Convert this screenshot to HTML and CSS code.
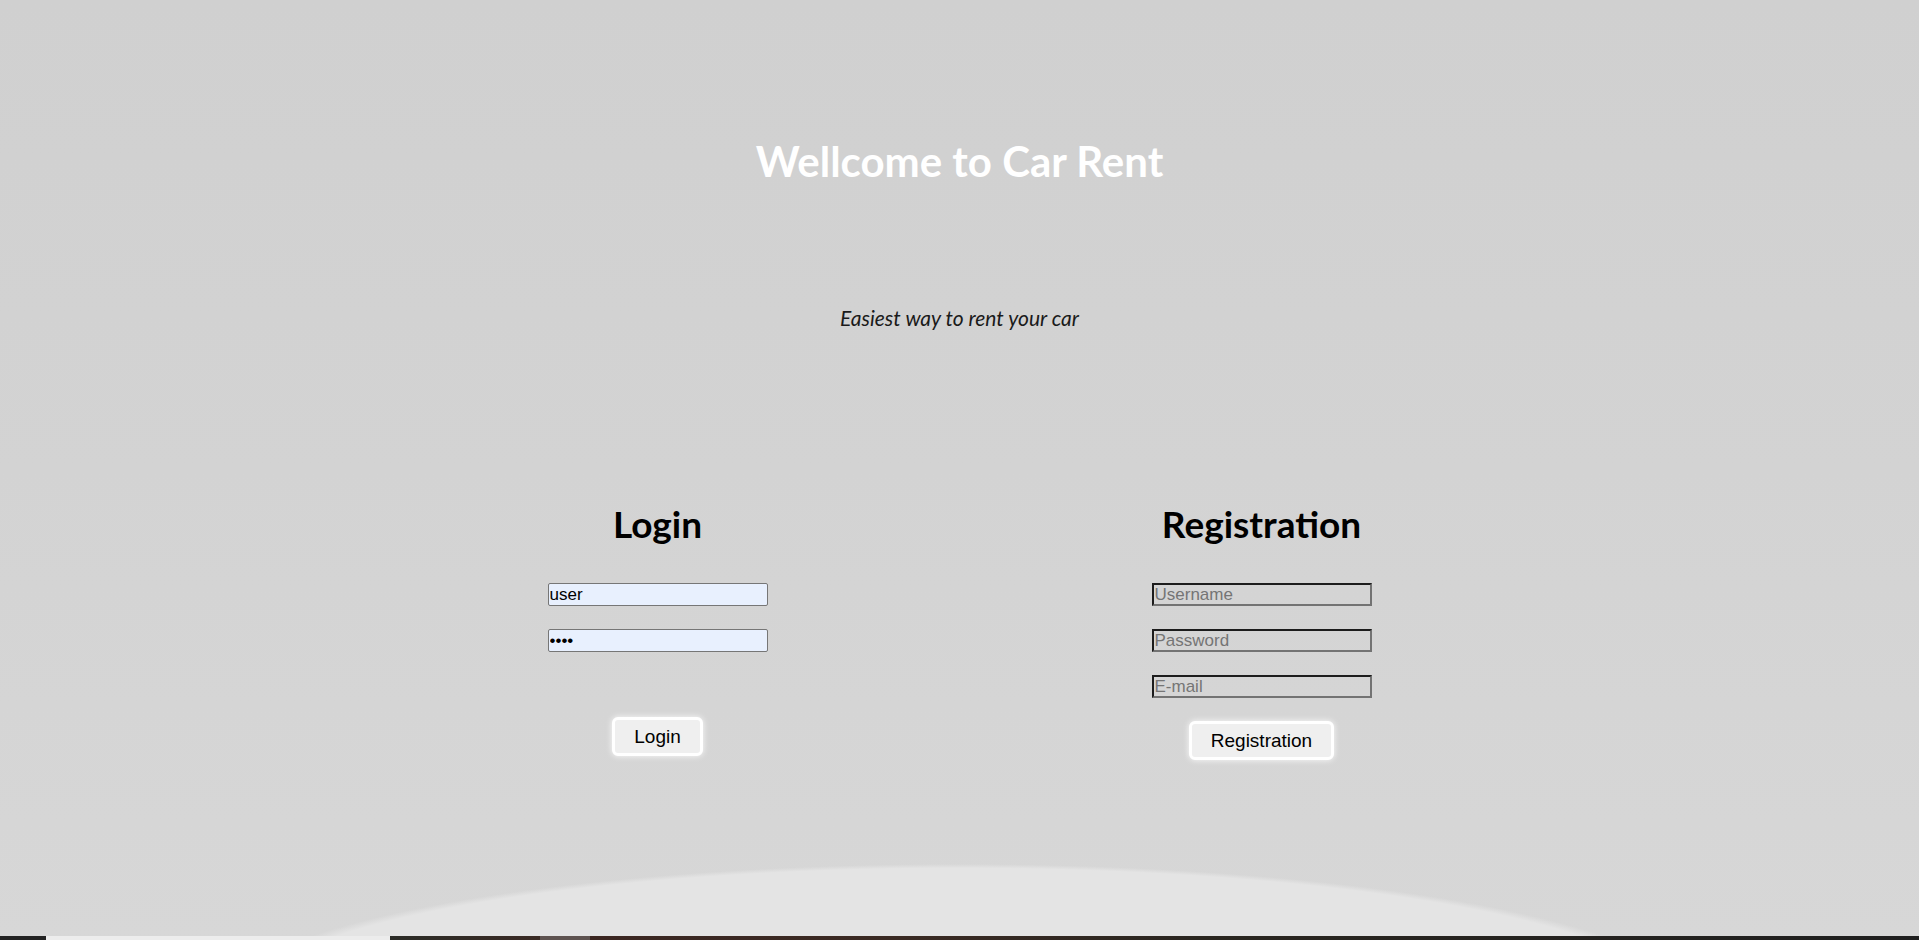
FILE: index.html
```html
<!DOCTYPE html>
<html lang="en">
<head>
<meta charset="utf-8">
<title>Car Rent</title>
<link rel="stylesheet" href="styles.css">
</head>
<body>
<div class="page">
  <header class="hero">
    <h1 class="hero-title">Wellcome to Car Rent</h1>
    <p class="hero-sub">Easiest way to rent your car</p>
  </header>
  <main class="forms">
    <section class="form-col">
      <h2 class="form-title">Login</h2>
      <form class="form-body">
        <input class="field field-filled" type="text" value="user">
        <input class="field field-filled" type="password" value="1234">
        <button type="button" class="btn btn-login">Login</button>
      </form>
    </section>
    <section class="form-col">
      <h2 class="form-title">Registration</h2>
      <form class="form-body">
        <input class="field field-empty" type="text" placeholder="Username">
        <input class="field field-empty" type="password" placeholder="Password">
        <input class="field field-empty" type="email" placeholder="E-mail">
        <button type="button" class="btn">Registration</button>
      </form>
    </section>
  </main>
  <div class="bottom-strip"></div>
</div>
</body>
</html>
```
FILE: styles.css
```css
html, body {
  margin: 0;
  padding: 0;
}
body {
  font-family: Lato, "Open Sans", sans-serif;
}
.page {
  min-height: 940px;
  height: 940px;
  display: flex;
  flex-direction: column;
  background:
    radial-gradient(ellipse 736px 138px at 958px 1002px, #e4e4e4 0%, #e4e4e4 97%, rgba(228,228,228,0) 100%),
    linear-gradient(180deg, #d0d0d0 0%, #d3d3d3 50%, #d7d7d7 100%);
  overflow: hidden;
}
.hero {
  padding-top: 135px;
  text-align: center;
}
.hero-title {
  margin: 0;
  font-size: 42px;
  line-height: 52px;
  font-weight: 700;
  color: #ffffff;
}
.hero-sub {
  margin: 119px 0 0;
  font-size: 21px;
  line-height: 24px;
  font-style: italic;
  color: #1a1a1a;
}
.forms {
  width: 1208px;
  margin: 173px auto 0;
  display: grid;
  grid-template-columns: 1fr 1fr;
}
.form-col {
  display: flex;
  flex-direction: column;
  align-items: center;
}
.form-title {
  margin: 0;
  font-size: 37px;
  line-height: 42px;
  font-weight: 700;
  color: #000;
}
.form-body {
  margin-top: 38px;
  display: flex;
  flex-direction: column;
  align-items: center;
  gap: 23px;
}
.field {
  box-sizing: border-box;
  width: 220px;
  height: 23px;
  margin: 0;
  padding: 0 1px;
  font-family: "Liberation Sans", Arial, sans-serif;
  font-size: 17px;
  outline: none;
}
.field-filled {
  background: #e8f0fe;
  border: 1px solid #767676;
  border-radius: 2px;
  color: #000;
}
.field-empty {
  background: transparent;
  border: 2px solid;
  border-color: #1c1c1c #737373 #737373 #1c1c1c;
  color: #000;
}
.field-empty::placeholder {
  color: #757575;
}
.btn {
  box-sizing: border-box;
  height: 39px;
  padding: 0 19px;
  background: #efefef;
  border: 3px solid #ffffff;
  border-radius: 6px;
  box-shadow: 0 0 6px rgba(255,255,255,0.9);
  font-family: "Liberation Sans", Arial, sans-serif;
  font-size: 19px;
  color: #000;
}
.btn-login {
  margin-top: 42px;
}
.bottom-strip {
  margin-top: auto;
  height: 4px;
  background: linear-gradient(90deg,
    #222222 0, #222222 46px,
    #ececec 46px, #ececec 390px,
    #2b2c27 390px, #3a2a24 540px,
    #5e5350 540px, #5e5350 590px,
    #3b2621 590px, #3a2a23 900px,
    #2a2620 1200px, #1f1f1f 1919px);
}
```
